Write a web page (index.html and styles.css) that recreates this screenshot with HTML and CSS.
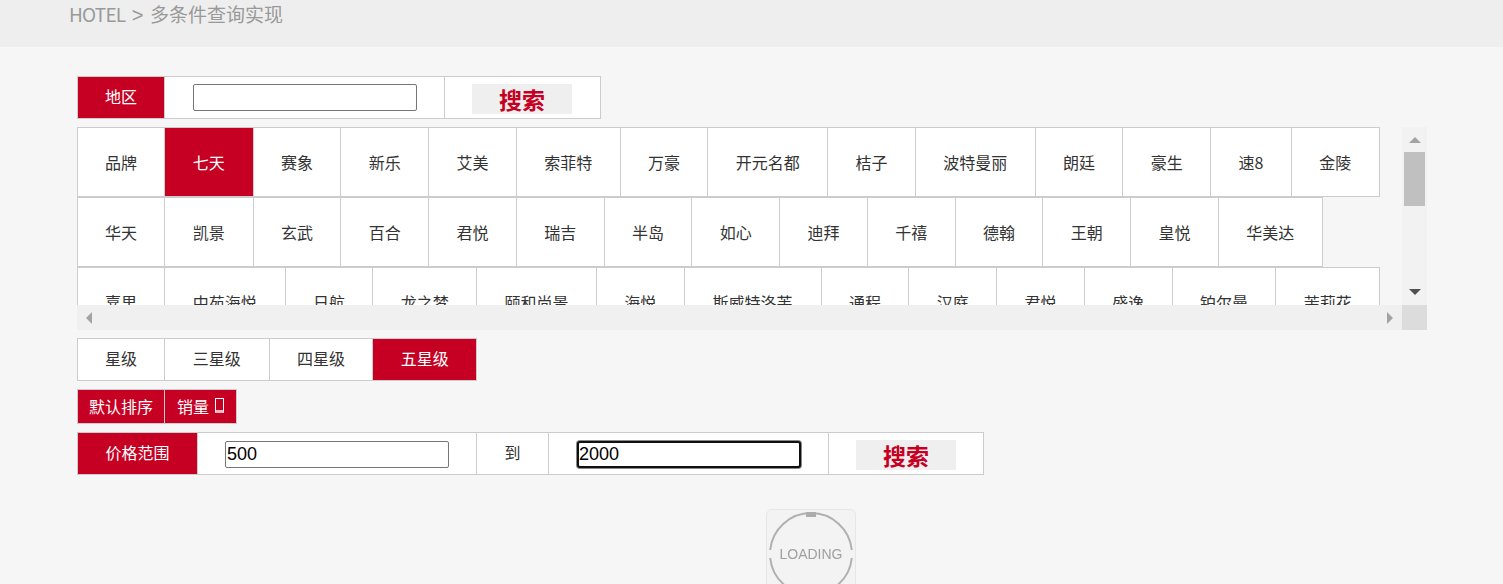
FILE: index.html
```html
<!DOCTYPE html>
<html lang="zh-CN">
<head>
    <meta charset="UTF-8">
    <title>HOTEL 多条件查询实现</title>
    <link rel="stylesheet" href="styles.css">
</head>
<body>

    <div class="header"><span class="crumb-root">HOTEL</span><span class="crumb-sep">&gt;</span>多条件查询实现</div>

    <div class="content">

        <div class="row search-row">
            <div class="cell label active">地区</div>
            <div class="cell field"><input class="text-input" type="text"></div>
            <div class="cell action"><button class="search-btn">搜索</button></div>
        </div>

        <div class="brand-box">
            <div class="brand-view">
                <div class="row brand-row">
                    <div class="cell">品牌</div>
                    <div class="cell active">七天</div>
                    <div class="cell">赛象</div>
                    <div class="cell">新乐</div>
                    <div class="cell">艾美</div>
                    <div class="cell">索菲特</div>
                    <div class="cell">万豪</div>
                    <div class="cell">开元名都</div>
                    <div class="cell">桔子</div>
                    <div class="cell">波特曼丽</div>
                    <div class="cell">朗廷</div>
                    <div class="cell">豪生</div>
                    <div class="cell">速8</div>
                    <div class="cell">金陵</div>
                </div>
                <div class="row brand-row">
                    <div class="cell">华天</div>
                    <div class="cell">凯景</div>
                    <div class="cell">玄武</div>
                    <div class="cell">百合</div>
                    <div class="cell">君悦</div>
                    <div class="cell">瑞吉</div>
                    <div class="cell">半岛</div>
                    <div class="cell">如心</div>
                    <div class="cell">迪拜</div>
                    <div class="cell">千禧</div>
                    <div class="cell">德翰</div>
                    <div class="cell">王朝</div>
                    <div class="cell">皇悦</div>
                    <div class="cell">华美达</div>
                </div>
                <div class="row brand-row">
                    <div class="cell">嘉里</div>
                    <div class="cell">中苑海悦</div>
                    <div class="cell">日航</div>
                    <div class="cell">龙之梦</div>
                    <div class="cell">颐和尚景</div>
                    <div class="cell">海悦</div>
                    <div class="cell long">斯威特洛芙</div>
                    <div class="cell">通程</div>
                    <div class="cell">汉庭</div>
                    <div class="cell">君悦</div>
                    <div class="cell">盛逸</div>
                    <div class="cell">铂尔曼</div>
                    <div class="cell">茉莉花</div>
                </div>
            </div>
            <div class="vbar">
                <span class="arrow up"></span>
                <span class="thumb"></span>
                <span class="arrow down"></span>
            </div>
            <div class="hbar">
                <span class="arrow left"></span>
                <span class="arrow right"></span>
            </div>
            <div class="corner"></div>
        </div>

        <div class="row star-row">
            <div class="cell">星级</div>
            <div class="cell">三星级</div>
            <div class="cell">四星级</div>
            <div class="cell active">五星级</div>
        </div>

        <div class="row sort-row">
            <div class="cell active">默认排序</div>
            <div class="cell active sales">销量<span class="tofu"></span></div>
        </div>

        <div class="row price-row">
            <div class="cell label-wide active">价格范围</div>
            <div class="cell field first">
                <input class="text-input" type="text" value="500">
            </div>
            <div class="cell to">到</div>
            <div class="cell field second">
                <input class="text-input focused" type="text" value="2000">
            </div>
            <div class="cell action"><button class="search-btn">搜索</button></div>
        </div>

        <div class="loading">
            <svg width="88" height="88" viewBox="0 0 88 88">
                <path class="ring" d="M3.2 40 A41 41 0 0 1 84.8 40"/>
                <path class="ring" d="M3.2 48 A41 41 0 0 0 84.8 48"/>
                <rect class="ring-dot" x="39" y="2" width="10" height="5"/>
                <text class="loading-text" x="44" y="49" text-anchor="middle">LOADING</text>
            </svg>
        </div>

    </div>

</body>
</html>
```

FILE: styles.css
```css
html, body {
    height: 100%;
    overflow: hidden;
}

body {
    margin: 0;
    background: #f6f6f6;
    color: #333;
    font-family: "Noto Sans CJK SC", "Liberation Sans", sans-serif;
    font-size: 16px;
}

.header {
    height: 47px;
    padding-left: 69px;
    background: #eeeeee;
    color: #999;
    font-size: 19px;
    line-height: 27px;
}

.crumb-root {
    letter-spacing: -0.8px;
}

.crumb-sep {
    margin: 0 6.5px;
    font-family: "Liberation Sans", Arial, sans-serif;
    font-size: 20px;
}

.content {
    padding: 29px 0 0 77px;
}

.row {
    display: flex;
    align-items: stretch;
}

.cell {
    display: flex;
    align-items: center;
    justify-content: center;
    box-sizing: content-box;
    padding: 0 27.375px 3px;
    margin-right: -1px;
    border: 1px solid #ccc;
    background: #fff;
    white-space: nowrap;
    line-height: 1;
}

.cell.active {
    background: #c60023;
    color: #fff;
}

.search-row {
    width: 524px;
    height: 43px;
}

.search-row .label {
    width: 32px;
    padding: 0 27px 3px;
}

.cell.field {
    width: 224px;
    padding: 0 27px 0 28px;
}

.cell.action {
    width: 100px;
    padding: 0 28px 0 27px;
}

.price-row .cell.action {
    padding: 0 27px;
}

.text-input {
    box-sizing: border-box;
    width: 224px;
    height: 27px;
    padding: 0 1px;
    border: 1px solid #767676;
    border-radius: 2px;
    background: #fff;
    color: #000;
    font-family: "Liberation Sans", Arial, sans-serif;
    font-size: 18px;
    outline: none;
}

.price-row .text-input {
    margin-top: 1px;
}

.text-input.focused {
    padding: 0;
    border: 2px solid #101010;
    border-radius: 3px;
    box-shadow: 0 0 0 1px #888;
}

.search-btn {
    width: 100px;
    height: 30px;
    margin-top: 3px;
    padding: 0;
    border: none;
    background: #efefef;
    color: #c60023;
    font-family: "Noto Sans CJK SC", "Liberation Sans", sans-serif;
    font-size: 23px;
    font-weight: bold;
    line-height: 30px;
}

.brand-box {
    display: grid;
    grid-template-columns: 1325px 25px;
    grid-template-rows: 178px 25px;
    width: 1350px;
    margin-top: 8px;
}

.brand-view {
    overflow: hidden;
}

.brand-row {
    height: 70px;
}

.brand-row .cell {
    padding-bottom: 1px;
}

/* first cell is a bit narrower than the rest, second makes up for it */
.brand-row .cell:first-child,
.star-row .cell:first-child {
    padding-left: 27px;
    padding-right: 27px;
}

.brand-row .cell:nth-child(2),
.star-row .cell:nth-child(2) {
    padding-left: 27.75px;
    padding-right: 27.75px;
}

.brand-row .cell.long {
    padding-left: 28px;
    padding-right: 28px;
}

.vbar {
    display: flex;
    flex-direction: column;
    align-items: center;
    background: #f2f2f2;
}

.thumb {
    width: 21px;
    height: 54px;
    margin-top: 9px;
    background: #c0c0c0;
}

.arrow {
    width: 0;
    height: 0;
    border: 6px solid transparent;
}

.arrow.up {
    margin-top: 10px;
    border-top: none;
    border-bottom-color: #a3a3a3;
}

.arrow.down {
    margin-top: 83px;
    border-bottom: none;
    border-top-color: #505050;
}

.hbar {
    display: flex;
    align-items: center;
    justify-content: space-between;
    padding: 0 9px;
    background: #f0f0f0;
}

.arrow.left {
    border-left: none;
    border-right-color: #a3a3a3;
}

.arrow.right {
    border-right: none;
    border-left-color: #a3a3a3;
}

.corner {
    background: #dcdcdc;
}

.star-row {
    height: 43px;
    margin-top: 8px;
}

.sort-row {
    height: 35px;
    margin-top: 8px;
}

.sort-row .cell {
    padding: 0 11px 2px;
}

.sort-row .cell.sales {
    padding: 0 12px 2px;
}

.tofu {
    display: inline-block;
    box-sizing: border-box;
    width: 9px;
    height: 15px;
    margin-left: 6px;
    border: 1px solid #fff;
    border-bottom: 3px solid #f0b8c4;
}

.price-row {
    height: 43px;
    margin-top: 8px;
}

.label-wide {
    width: 64.25px;
}

.price-row .cell.first {
    padding: 0 27px;
}

.cell.to {
    width: 16px;
    padding: 0 27.5px 3px;
}

.price-row .cell.second {
    padding: 0 27px 0 28px;
}

.loading {
    box-sizing: border-box;
    width: 90px;
    height: 90px;
    margin: 34px 0 0 689px;
    border: 1px solid #e6e6e6;
    border-radius: 6px;
    background: #f3f3f3;
}

.loading svg {
    display: block;
    filter: blur(0.4px);
}

.ring {
    fill: none;
    stroke: #b0b0b0;
    stroke-width: 2;
}

.ring-dot {
    fill: #adadad;
}

.loading-text {
    fill: #a0a0a0;
    font-family: "Liberation Sans", Arial, sans-serif;
    font-size: 14px;
}
```
